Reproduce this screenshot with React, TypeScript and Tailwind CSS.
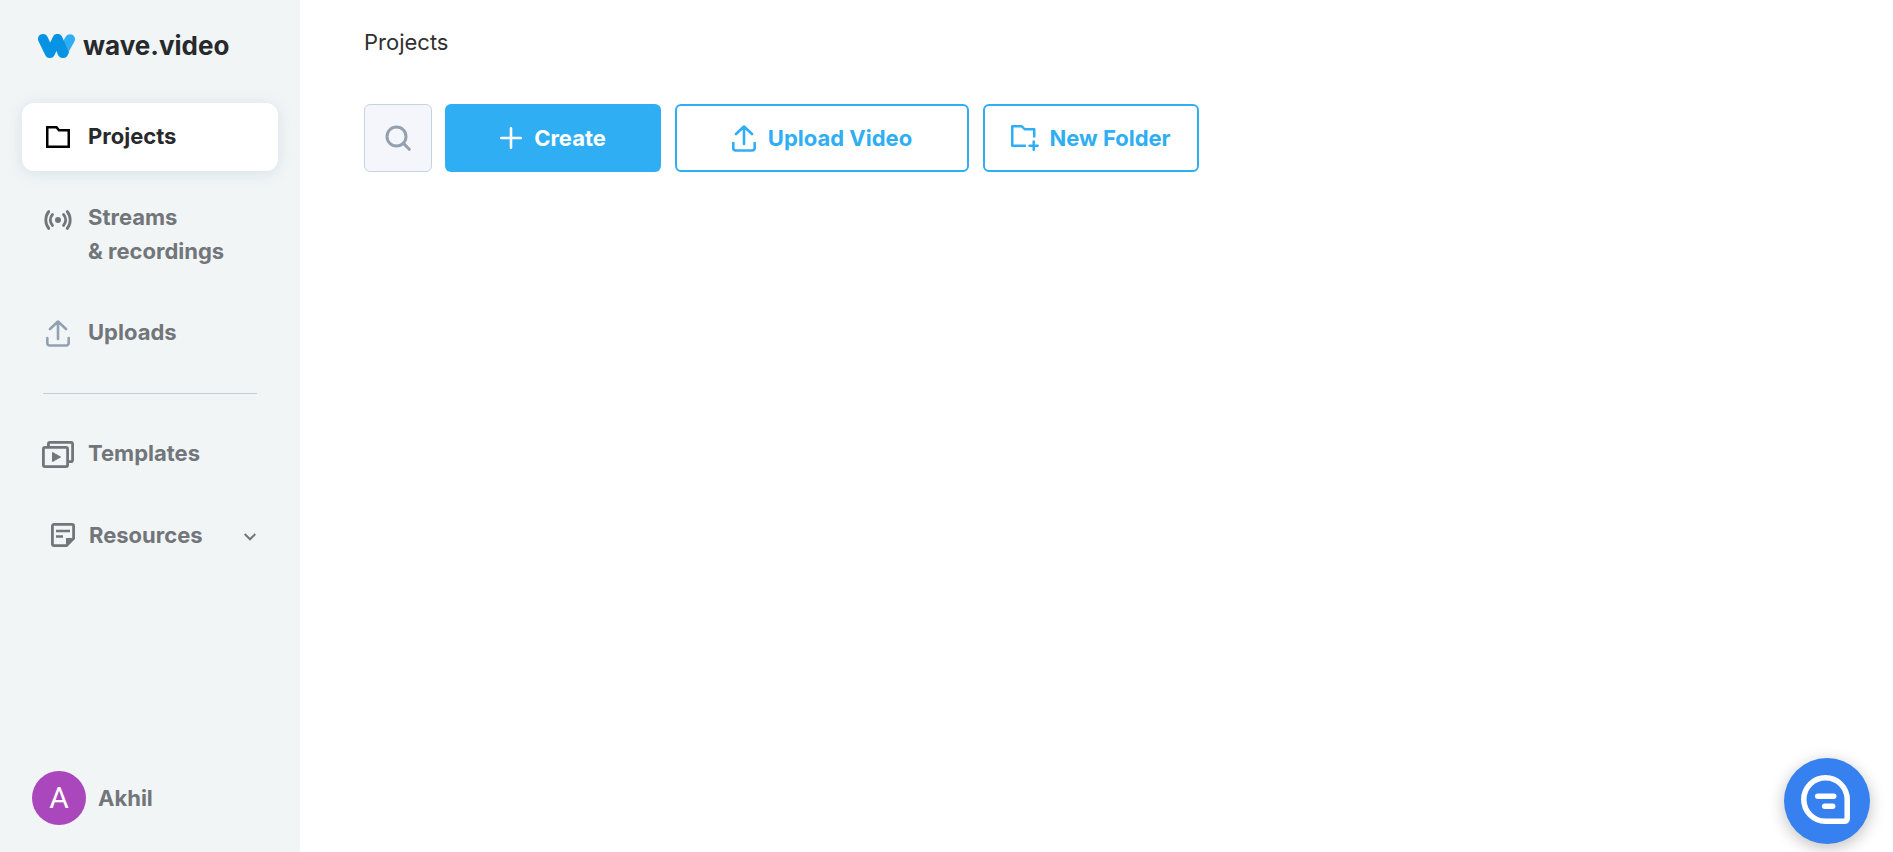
import type { ReactNode } from "react";

function LogoMark() {
  return (
    <svg width="37" height="24" viewBox="0 0 37 24" fill="none" className="shrink-0">
      <path d="M24.500 18.500 32 5.200" stroke="#2faef4" strokeWidth="10" strokeLinecap="round" />
      <path
        d="M5 0a5 5 0 0 1 4.600 3l2.600 5.500L14.800 3c1-2 2-3 3.800-3h1.600c1.800 0 3.100 1 4 3l6.800 15.500-1.200 2.500c-1 2-2.200 3-4.300 3h-1c-2 0-3.300-1-4.300-3l-1.800-4-1.800 4c-1 2-2.300 3-4.300 3h-.8c-2.100 0-3.300-1-4.300-3L.5 7.200A5 5 0 0 1 5 0Z"
        fill="#0693e3"
      />
    </svg>
  );
}

function FolderIcon() {
  return (
    <svg width="24" height="22" viewBox="0 0 24 22" fill="none" stroke="#000" strokeWidth="2.5">
      <path d="M1.250 1.250h9.250l2.500 3h9.750v16.500H1.250Z" />
    </svg>
  );
}

function StreamIcon() {
  return (
    <svg width="28" height="26" viewBox="0 0 28 26" fill="none" stroke="currentColor" strokeWidth="2.800" strokeLinecap="round">
      <circle cx="14" cy="15" r="3" fill="currentColor" stroke="none" />
      <path d="M8.500 9.500a8 8 0 0 0 0 11M19.500 9.500a8 8 0 0 1 0 11M4.800 6.500a13.500 13.500 0 0 0 0 17M23.200 6.500a13.500 13.500 0 0 1 0 17" />
    </svg>
  );
}

function UploadIcon() {
  return (
    <svg width="24" height="27" viewBox="0 0 24 27" fill="none" stroke="currentColor" strokeWidth="2.600" strokeLinecap="round" strokeLinejoin="round">
      <path d="M12 19V1.500M4 9l8-7.500L20 9M1.300 18v5a2.500 2.500 0 0 0 2.500 2.500h16.400a2.500 2.500 0 0 0 2.500-2.500v-5" />
    </svg>
  );
}

function TemplatesIcon() {
  return (
    <svg width="32" height="27" viewBox="0 0 32 27" fill="none" stroke="currentColor" strokeWidth="2.800" strokeLinejoin="round">
      <rect x="1.400" y="6.400" width="24.200" height="19.200" rx="1.500" />
      <path d="M6.400 6V2.900a1.500 1.500 0 0 1 1.500-1.500h21.200a1.500 1.500 0 0 1 1.500 1.500v16.200a1.500 1.500 0 0 1-1.500 1.500H26" />
      <path d="M10.500 11.500v9l8-4.500Z" fill="currentColor" strokeWidth="1" />
    </svg>
  );
}

function NoteIcon() {
  return (
    <svg width="24" height="24" viewBox="0 0 24 24" fill="none" stroke="currentColor" strokeWidth="2.800">
      <path d="M3 1.400h18a1.600 1.600 0 0 1 1.600 1.600v12.500l-7.100 7.100H3A1.600 1.600 0 0 1 1.400 21V3A1.600 1.600 0 0 1 3 1.400Z" />
      <path d="M15 24v-9h9Z" fill="currentColor" stroke="none" />
      <path d="M5 8h14M5 13.500h7" strokeWidth="2.500" />
    </svg>
  );
}

function ChevronIcon() {
  return (
    <svg width="12" height="8" viewBox="0 0 12 8" fill="none" stroke="currentColor" strokeWidth="2">
      <path d="m.7 1 5.300 5.300L11.300 1" />
    </svg>
  );
}

function SearchIcon() {
  return (
    <svg width="26" height="26" viewBox="0 0 26 26" fill="none" stroke="currentColor" strokeWidth="3">
      <circle cx="11.500" cy="11.500" r="9.500" />
      <path d="m18.400 18.400 5.900 5.900" strokeLinecap="round" />
    </svg>
  );
}

function PlusIcon() {
  return (
    <svg width="22" height="22" viewBox="0 0 22 22" fill="none" stroke="currentColor" strokeWidth="2.600" strokeLinecap="round">
      <path d="M11 1.300v19.400M1.300 11h19.400" />
    </svg>
  );
}

function NewFolderIcon() {
  return (
    <svg width="28" height="26" viewBox="0 0 28 26" fill="none" stroke="currentColor" strokeWidth="2.500" strokeLinecap="round" strokeLinejoin="round">
      <path d="M14 20.700H1.250V1.250h9.500l2.900 3h9.600v7.250M22.700 16.500v8.200M18.500 20.700h8.200" />
    </svg>
  );
}

function ChatIcon() {
  return (
    <svg width="49" height="49" viewBox="0 0 49 49" fill="none" stroke="#fff" strokeWidth="5.500" strokeLinecap="round" strokeLinejoin="round">
      <path d="M24.500 2.800a21.700 21.700 0 1 0 0 43.400h19.200a2.500 2.500 0 0 0 2.500-2.500V24.500A21.700 21.700 0 0 0 24.500 2.800Z" />
      <path d="M16.700 21.300h16M23.700 31.300h8" />
    </svg>
  );
}

interface NavItemProps {
  icon: ReactNode;
  children: ReactNode;
  active?: boolean;
}

function NavItem({ icon, children, active }: NavItemProps) {
  return (
    <a
      href="#"
      className={
        active
          ? "flex items-start rounded-xl bg-white pt-4 pb-[18px] pl-4 text-[#27292c] shadow-[0_2px_16px_rgba(120,150,175,0.2)]"
          : "flex items-start pt-4 pb-[18px] pl-4"
      }
    >
      <span className="mr-2.5 flex h-[34px] w-10 shrink-0 items-center justify-center pt-0.5">{icon}</span>
      {children}
    </a>
  );
}

export default function App() {
  return (
    <div className="flex min-h-screen bg-white font-['Inter',sans-serif]">
      <aside className="flex w-[300px] shrink-0 flex-col bg-[#f1f5f6] px-[22px] text-[22px] leading-[34px] font-bold text-[#72767b]">
        <a href="#" className="mt-7 flex h-9 items-center gap-2 pl-4 text-[26px] text-[#27292c]">
          <LogoMark />
          wave.video
        </a>

        <nav className="mt-[39px] flex flex-col gap-[13px]">
          <NavItem icon={<FolderIcon />} active>
            Projects
          </NavItem>
          <NavItem icon={<StreamIcon />}>
            <span>
              Streams
              <br />
              &amp; recordings
            </span>
          </NavItem>
          <NavItem icon={<span className="text-[#92a1b2]"><UploadIcon /></span>}>Uploads</NavItem>
        </nav>

        <hr className="mx-[21px] my-[26px] border-[#bfcfd5]" />

        <nav className="flex flex-col gap-[13px]">
          <NavItem icon={<TemplatesIcon />}>Templates</NavItem>
          <button className="flex items-center py-[17px] pr-[22px] pl-[29px]">
            <NoteIcon />
            <span className="ml-3.5">Resources</span>
            <span className="ml-auto pt-1">
              <ChevronIcon />
            </span>
          </button>
        </nav>

        <button className="mt-auto mb-[27px] flex items-center gap-3 pl-2.5">
          <span className="flex size-[54px] items-center justify-center rounded-full bg-[#ab47bc] font-['Roboto',sans-serif] text-[30px] font-normal text-white">
            A
          </span>
          Akhil
        </button>
      </aside>

      <main className="flex-1 pt-[25px] pl-16">
        <h1 className="text-[22px] leading-[34px] text-[#303030]">Projects</h1>

        <div className="mt-[45px] flex gap-[13px] text-[22px] font-bold">
          <button
            aria-label="Search"
            className="flex size-[68px] items-center justify-center rounded-md border border-[#c5d4e0] bg-[#f5f6fb] text-[#92a0af]"
          >
            <SearchIcon />
          </button>
          <div className="flex gap-3.5 text-[#2faef4]">
            <button className="flex h-[68px] w-[216px] items-center justify-center gap-3 rounded-md bg-[#2faef4] text-white">
              <PlusIcon />
              Create
            </button>
            <button className="flex h-[68px] w-[294px] items-center justify-center gap-3 rounded-md border-2 border-[#2faef4]">
              <UploadIcon />
              Upload Video
            </button>
            <button className="flex h-[68px] w-[216px] items-center justify-center gap-2.5 rounded-md border-2 border-[#2faef4]">
              <NewFolderIcon />
              New Folder
            </button>
          </div>
        </div>
      </main>

      <button
        aria-label="Open chat"
        className="fixed right-[23px] bottom-2 flex size-[86px] items-center justify-center rounded-full bg-[#3780ef] pr-1 pb-1 shadow-[0_4px_16px_rgba(0,0,0,0.25)]"
      >
        <ChatIcon />
      </button>
    </div>
  );
}
